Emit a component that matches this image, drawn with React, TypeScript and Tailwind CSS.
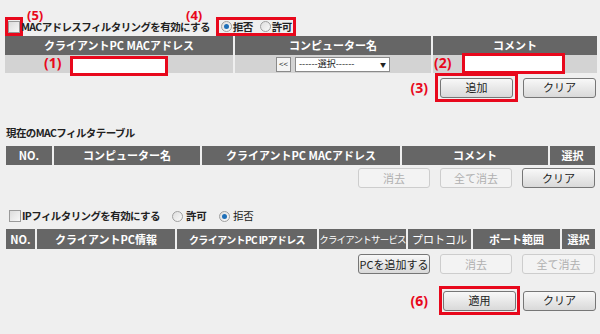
import type { ReactNode } from "react"

const font = { fontFamily: '"Noto Sans CJK JP", "Noto Sans", sans-serif' }

function Label({ children, size = "text-[14px]" }: { children: ReactNode; size?: string }) {
  return (
    <span
      className={`${size} leading-[16px] font-bold text-[#e8081c]`}
      style={{ fontFamily: '"Noto Sans", "Open Sans", sans-serif' }}
    >
      {children}
    </span>
  )
}

function Button({ children, disabled, w = "w-[73px]" }: { children: ReactNode; disabled?: boolean; w?: string }) {
  return (
    <div
      className={
        disabled
          ? `${w} h-[20px] flex items-center justify-center rounded-[3px] border border-[#cdcdcd] bg-[#f3f3f3] text-[11px] text-[#b0b0b0] whitespace-nowrap`
          : `${w} h-[20px] flex items-center justify-center rounded-[3px] border border-[#767676] bg-gradient-to-b from-[#f8f8f8] to-[#d9d9d9] text-[11px] text-[#222] whitespace-nowrap`
      }
    >
      {children}
    </div>
  )
}

function Checkbox() {
  return <div className="w-[12px] h-[12px] shrink-0 border border-[#9a9a9a] bg-gradient-to-br from-[#dcdcdc] to-[#f8f8f8]" />
}

function Radio({ on }: { on?: boolean }) {
  return (
    <div className="w-[11px] h-[11px] shrink-0 rounded-full border border-[#a0a0a0] bg-gradient-to-br from-[#dedede] to-[#fafafa] flex items-center justify-center">
      {on && <div className="w-[5px] h-[5px] rounded-full bg-[#1f6fb8]" />}
    </div>
  )
}

function Th({ children, cls = "" }: { children: ReactNode; cls?: string }) {
  return (
    <div className={`bg-[#666666] text-white font-bold flex items-center justify-center whitespace-nowrap overflow-hidden ${cls}`}>
      {children}
    </div>
  )
}

export default function App() {
  return (
    <div className="w-[600px] h-[334px] bg-[#efefef] overflow-hidden text-[#222]" style={font}>
      {/* annotation labels (5) (4) */}
      <div className="h-[17px] pt-[1px] flex pl-[27px]">
        <div className="w-[159px]">
          <Label size="text-[13px]">(5)</Label>
        </div>
        <div>
          <Label size="text-[13px]">(4)</Label>
        </div>
      </div>

      {/* MAC filtering enable row */}
      <div className="h-[19px] flex items-center pl-[5px] whitespace-nowrap">
        <div className="w-[18px] h-[19px] shrink-0 border-[3px] border-[#e8081c] flex items-center justify-center">
          <Checkbox />
        </div>
        <span className="-ml-[2px] text-[10.5px] leading-[14px] font-bold tracking-[-0.6px]">MACアドレスフィルタリングを有効にする</span>
        <div className="ml-[6px] w-[80px] h-[19px] shrink-0 border-[3px] border-[#e8081c] flex items-center pl-[2px] gap-[1px] text-[10.5px] leading-[14px] font-bold tracking-[-0.5px]">
          <Radio on />
          <span className="mr-[6px]">拒否</span>
          <Radio />
          <span>許可</span>
        </div>
      </div>

      {/* add table */}
      <div className="ml-[5px] grid grid-cols-[228px_196px_164px] gap-x-[2px]">
        <Th cls="h-[19px] text-[11px]">クライアントPC MACアドレス</Th>
        <Th cls="h-[19px] text-[11px]">コンピューター名</Th>
        <Th cls="h-[19px] text-[11px]">コメント</Th>
        <div className="h-[18px] bg-[#d3d3d3] flex items-start pl-[39px] gap-[8px]">
          <Label>(1)</Label>
          <div className="w-[98px] h-[20px] mt-[1px] border-[3px] border-[#e8081c] bg-white" />
        </div>
        <div className="h-[18px] bg-[#d3d3d3] flex items-center justify-center gap-[4px]">
          <div className="w-[15px] h-[15px] border border-[#8a8a8a] bg-[#f4f4f4] flex items-center justify-center text-[8px] leading-none">&lt;&lt;</div>
          <div className="w-[95px] h-[15px] border border-[#8a8a8a] bg-white flex items-center justify-between px-[3px] text-[9px]">
            <span>------選択------</span>
            <span className="text-[6px]">▼</span>
          </div>
        </div>
        <div className="h-[18px] bg-[#d3d3d3] flex items-start pl-[1px] gap-[10px]">
          <Label>(2)</Label>
          <div className="w-[103px] h-[21px] -mt-[2px] border-[3px] border-[#e8081c] bg-white" />
        </div>
      </div>

      {/* add / clear */}
      <div className="h-[29px] flex items-center justify-end pr-[4px]">
        <Label>(3)</Label>
        <div className="ml-[7px] w-[83px] h-[29px] border-[3px] border-[#e8081c] flex items-center justify-center">
          <Button>追加</Button>
        </div>
        <div className="ml-[5px]">
          <Button>クリア</Button>
        </div>
      </div>

      {/* current MAC filter table */}
      <div className="mt-[24px] h-[14px] pl-[6px] text-[10.5px] font-bold leading-[14px] tracking-[-0.6px]">現在のMACフィルタテーブル</div>
      <div className="mt-[6px] ml-[6px] grid grid-cols-[46px_146px_198px_146px_45px] gap-x-[2px]">
        <Th cls="h-[19px] text-[11px]">NO.</Th>
        <Th cls="h-[19px] text-[11px]">コンピューター名</Th>
        <Th cls="h-[19px] text-[11px]">クライアントPC MACアドレス</Th>
        <Th cls="h-[19px] text-[11px]">コメント</Th>
        <Th cls="h-[19px] text-[11px]">選択</Th>
      </div>
      <div className="mt-[3px] h-[20px] flex justify-end gap-[10px] pr-[5px]">
        <Button disabled w="w-[72px]">消去</Button>
        <Button disabled w="w-[72px]">全て消去</Button>
        <Button w="w-[73px]">クリア</Button>
      </div>

      {/* IP filtering */}
      <div className="mt-[20px] h-[16px] flex items-center pl-[9px] text-[10.5px] font-bold whitespace-nowrap">
        <Checkbox />
        <span className="ml-[1px] tracking-[-0.6px]">IPフィルタリングを有効にする</span>
        <div className="ml-[12px] flex items-center gap-[3px]">
          <Radio />
          <span>許可</span>
        </div>
        <div className="ml-[12px] flex items-center gap-[3px]">
          <Radio on />
          <span className="font-normal">拒否</span>
        </div>
      </div>
      <div className="mt-[5px] ml-[6px] grid grid-cols-[29px_138px_140px_87px_63px_87px_33px] gap-x-[2px]">
        <Th cls="h-[20px] text-[11px]">NO.</Th>
        <Th cls="h-[20px] text-[11px]">クライアントPC情報</Th>
        <Th cls="h-[20px] text-[10px] tracking-[-0.6px]">クライアントPC IPアドレス</Th>
        <Th cls="h-[20px] !font-normal text-[9.5px] tracking-[-0.8px]">クライアントサービス</Th>
        <Th cls="h-[20px] !font-normal text-[11px]">プロトコル</Th>
        <Th cls="h-[20px] text-[11px]">ポート範囲</Th>
        <Th cls="h-[20px] text-[11px]">選択</Th>
      </div>
      <div className="mt-[5px] h-[20px] flex justify-end gap-[10px] pr-[5px]">
        <Button w="w-[72px]">PCを追加する</Button>
        <Button disabled w="w-[72px]">消去</Button>
        <Button disabled w="w-[73px]">全て消去</Button>
      </div>

      {/* apply / clear */}
      <div className="mt-[12px] h-[29px] flex items-center justify-end pr-[4px]">
        <Label>(6)</Label>
        <div className="ml-[11px] w-[81px] h-[29px] border-[3px] border-[#e8081c] flex items-center justify-center">
          <Button>適用</Button>
        </div>
        <div className="ml-[3px]">
          <Button>クリア</Button>
        </div>
      </div>
    </div>
  )
}
